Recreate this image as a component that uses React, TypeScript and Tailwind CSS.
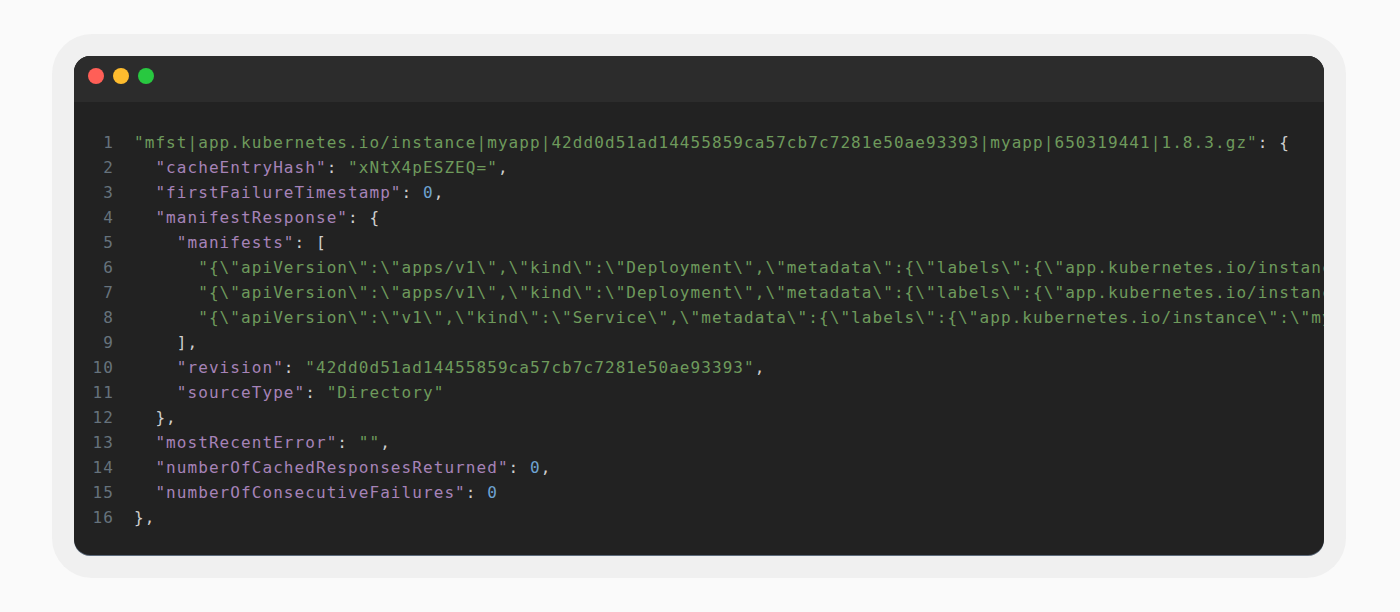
import React from 'react';

type Tok = { t: string; c: 'k' | 's' | 'n' | 'p' };

const k = (t: string): Tok => ({ t, c: 'k' });
const s = (t: string): Tok => ({ t, c: 's' });
const n = (t: string): Tok => ({ t, c: 'n' });
const p = (t: string): Tok => ({ t, c: 'p' });

const manifestA =
    '"{\\"apiVersion\\":\\"apps/v1\\",\\"kind\\":\\"Deployment\\",\\"metadata\\":{\\"labels\\":{\\"app.kubernetes.io/instance\\":\\"myapp\\"},\\"name\\":\\"myapp\\",\\"namespace\\":\\"default\\"}}"';
const manifestB =
    '"{\\"apiVersion\\":\\"v1\\",\\"kind\\":\\"Service\\",\\"metadata\\":{\\"labels\\":{\\"app.kubernetes.io/instance\\":\\"myapp\\"},\\"name\\":\\"myapp\\",\\"namespace\\":\\"default\\"}}"';

const lines: Tok[][] = [
    [s('"mfst|app.kubernetes.io/instance|myapp|42dd0d51ad14455859ca57cb7c7281e50ae93393|myapp|650319441|1.8.3.gz"'), p(': {')],
    [p('  '), k('"cacheEntryHash"'), p(': '), s('"xNtX4pESZEQ="'), p(',')],
    [p('  '), k('"firstFailureTimestamp"'), p(': '), n('0'), p(',')],
    [p('  '), k('"manifestResponse"'), p(': {')],
    [p('    '), k('"manifests"'), p(': [')],
    [p('      '), s(manifestA), p(',')],
    [p('      '), s(manifestA), p(',')],
    [p('      '), s(manifestB)],
    [p('    ],')],
    [p('    '), k('"revision"'), p(': '), s('"42dd0d51ad14455859ca57cb7c7281e50ae93393"'), p(',')],
    [p('    '), k('"sourceType"'), p(': '), s('"Directory"')],
    [p('  },')],
    [p('  '), k('"mostRecentError"'), p(': '), s('""'), p(',')],
    [p('  '), k('"numberOfCachedResponsesReturned"'), p(': '), n('0'), p(',')],
    [p('  '), k('"numberOfConsecutiveFailures"'), p(': '), n('0')],
    [p('},')],
];

const colorOf: Record<Tok['c'], string> = {
    k: 'text-[#a683b8]',
    s: 'text-[#6e9a5c]',
    n: 'text-[#6ea3d2]',
    p: 'text-[#cfcfcf]',
};

export default function App() {
    return (
        <div className="w-[1400px] h-[612px] bg-[#fafafa] pt-[34px] pl-[52px]">
            <div className="w-[1294px] h-[544px] bg-[#f0f0f0] rounded-[40px] p-[22px]">
                {/* Editor window */}
                <div className="w-[1250px] h-[499px] rounded-[16px] overflow-hidden bg-[#222222] shadow-[0_1px_0_#5d6b7c] flex flex-col">
                    {/* Title bar */}
                    <div className="h-[46px] bg-[#2c2c2c] flex items-start gap-[9px] pl-[14px] pt-[12px] shrink-0">
                        <span className="w-4 h-4 rounded-full bg-[#ff5f57]"></span>
                        <span className="w-4 h-4 rounded-full bg-[#febc2e]"></span>
                        <span className="w-4 h-4 rounded-full bg-[#28c840]"></span>
                    </div>

                    {/* Code */}
                    <div className="pt-[28px] font-['DejaVu_Sans_Mono',monospace] text-[16px] leading-[25px] tracking-[1.07px]">
                        {lines.map((line, i) => (
                            <div key={i} className="flex whitespace-pre">
                                <span className="w-[40px] shrink-0 text-right text-[#66727c]">{i + 1}</span>
                                <span className="pl-[20px] overflow-hidden">
                                    {line.map((tok, j) => (
                                        <span key={j} className={colorOf[tok.c]}>{tok.t}</span>
                                    ))}
                                </span>
                            </div>
                        ))}
                    </div>
                </div>
            </div>
        </div>
    );
}
